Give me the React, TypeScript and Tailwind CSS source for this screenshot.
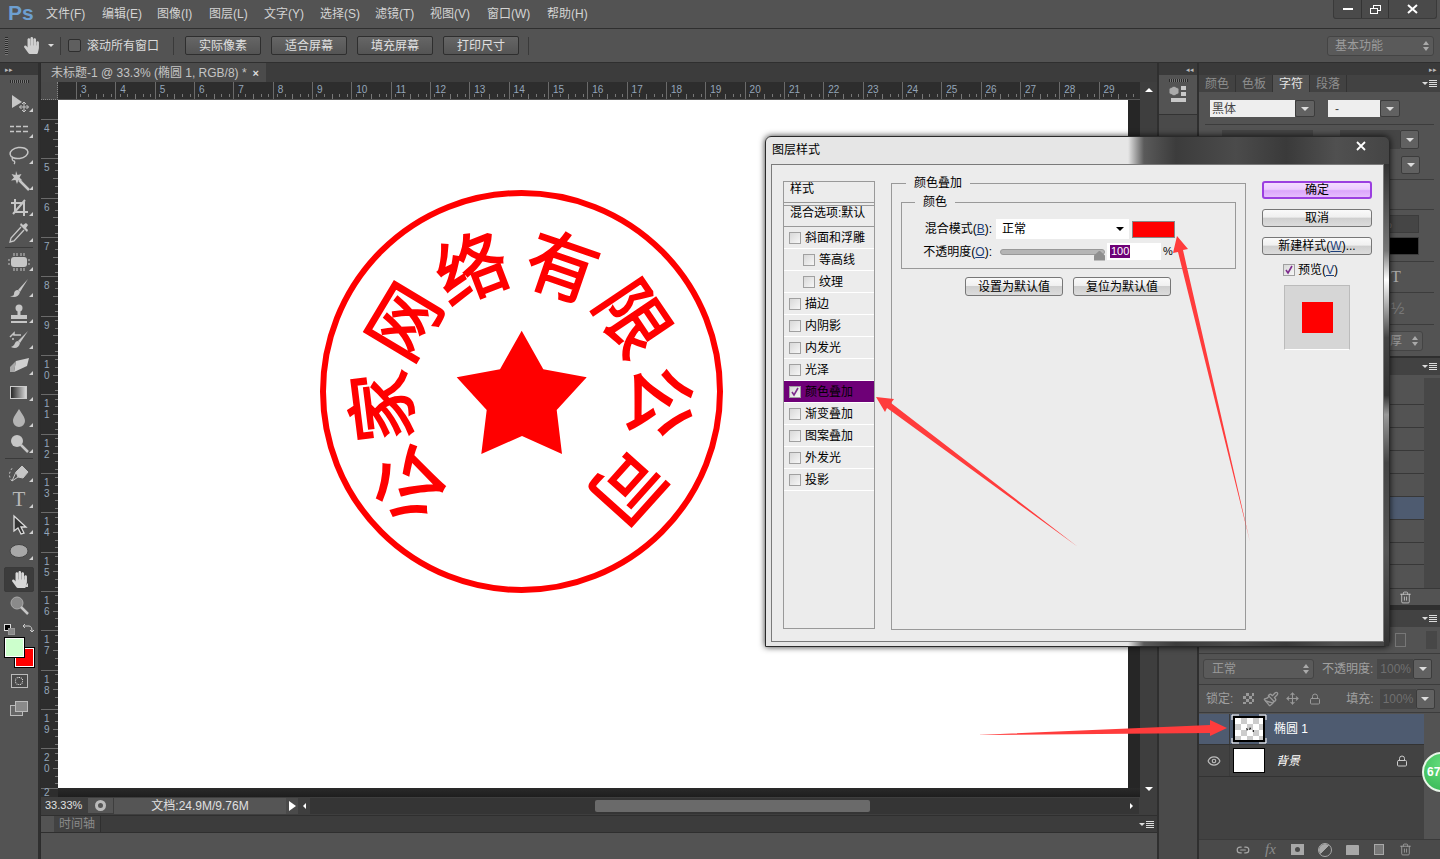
import { Eye, Link2, Lock, Move, Paintbrush, Trash2 } from "lucide-react";
import { FaHandPaper } from "react-icons/fa";
import type { ReactNode } from "react";

const menus = [
  ["文件(F)", "w-[56px]"],
  ["编辑(E)", "w-[55px]"],
  ["图像(I)", "w-[52px]"],
  ["图层(L)", "w-[55px]"],
  ["文字(Y)", "w-[56px]"],
  ["选择(S)", "w-[55px]"],
  ["滤镜(T)", "w-[55px]"],
  ["视图(V)", "w-[57px]"],
  ["窗口(W)", "w-[60px]"],
  ["帮助(H)", "w-[50px]"],
] as const;
const viewButtons = ["实际像素", "适合屏幕", "填充屏幕", "打印尺寸"];
const hRuler = Array.from({ length: 27 }, (_, i) => i + 3);
const vRuler = Array.from({ length: 17 }, (_, i) => i + 4);

const styleRows = [
  { label: "斜面和浮雕" },
  { label: "等高线", sub: true },
  { label: "纹理", sub: true },
  { label: "描边" },
  { label: "内阴影" },
  { label: "内发光" },
  { label: "光泽" },
  { label: "颜色叠加", active: true },
  { label: "渐变叠加" },
  { label: "图案叠加" },
  { label: "外发光" },
  { label: "投影" },
];

const stamp = [
  ["公", 405, 489, -131],
  ["家", 377, 407, -97],
  ["网", 400, 319, -59],
  ["络", 470, 264, -21],
  ["有", 564, 262, 19],
  ["限", 637, 315, 56],
  ["公", 665, 402, 94],
  ["司", 632, 490, 132],
] as const;

function Svg({ children }: { children: ReactNode }) {
  return (
    <svg width="24" height="24" viewBox="0 0 24 24" className="block" fill="none">
      {children}
    </svg>
  );
}

const c = "#c6c6c6";

const toolsA: ReactNode[] = [
  <Svg>
    <path d="M5 4v13l10-6z" fill={c} />
    <path d="M17 11v10M12.5 16h9M17 11l-2 2M17 11l2 2M17 21l-2-2M17 21l2-2M12.5 16l2-2M12.5 16l2 2M21.5 16l-2-2M21.5 16l-2 2" stroke={c} />
  </Svg>,
  <Svg>
    <path d="M3 9.5h4M9 9.5h5M16 9.5h5M3 14.5h4M9 14.5h5M16 14.5h5" stroke={c} strokeWidth="1.5" />
  </Svg>,
  <Svg>
    <ellipse cx="12" cy="10" rx="9" ry="5.5" stroke={c} strokeWidth="1.5" transform="rotate(-8 12 10)" />
    <path d="M6 14c-2 2 0 4 1 4s1 2 0 3" stroke={c} strokeWidth="1.3" />
  </Svg>,
  <Svg>
    <path d="M9 2l1.5 4 4-1-2 3.5 3 3-4-.5-1.500 4-1.500-4-4.500.5 3-3-2.500-3.500 4 1z" fill={c} />
    <path d="M12 11l10 10" stroke={c} strokeWidth="2.500" />
  </Svg>,
  <Svg>
    <path d="M8 4v13h13M4 8h13v13M18 5L6 19" stroke={c} strokeWidth="2" />
  </Svg>,
  <Svg>
    <path d="M14 6L4 17l-1 4 4-1 10-11" stroke={c} strokeWidth="1.300" />
    <path d="M13 4l7 7 1-2-2-2 2-3-2-2-3 2-2-2z" fill={c} />
  </Svg>,
];

const toolsB: ReactNode[] = [
  <Svg>
    <rect x="4" y="7" width="16" height="10" rx="3" fill={c} />
    <path d="M7 3v3M10 3v3M14 3v3M17 3v3M7 18v3M10 18v3M14 18v3M17 18v3M1 10h2M1 14h2M21 10h2M21 14h2" stroke={c} />
  </Svg>,
  <Svg>
    <path d="M21 3L11 14l2 2z" fill={c} />
    <path d="M11 14c-3 0-4 2-4 4s-2 2-4 2c4 2 9 1 10-4z" fill={c} />
  </Svg>,
  <Svg>
    <circle cx="12" cy="6" r="3.500" fill={c} />
    <path d="M10.500 8h3v5h-3zM4 13h16v4H4zM4 19h16v2H4z" fill={c} />
  </Svg>,
  <Svg>
    <path d="M21 3L11 13l2 2z" fill={c} />
    <path d="M11 13c-3 0-3 3-4 4s-3 2-3 2c4 2 8 1 9-4z" fill={c} />
    <path d="M3 9l4-4v2h7M5 11h2" stroke={c} strokeWidth="1.500" />
  </Svg>,
  <Svg>
    <path d="M9 7L22 4l-2 8-13 6z" fill="#d0d0d0" />
    <path d="M3 13l6-6-2 11H3z" fill="#a8a8a8" />
  </Svg>,
  <Svg>
    <defs>
      <linearGradient id="grad" x1="0" x2="1" y1="0" y2="0">
        <stop offset="0" stopColor="#222" />
        <stop offset="1" stopColor="#ddd" />
      </linearGradient>
    </defs>
    <rect x="3.500" y="6.500" width="16" height="12" fill="url(#grad)" stroke="#ccc" />
  </Svg>,
  <Svg>
    <path d="M12 3c-3 5-6 8-6 12a6 6 0 0012 0c0-4-3-7-6-12z" fill="#b4b4b4" />
  </Svg>,
  <Svg>
    <circle cx="10" cy="9" r="6" fill={c} />
    <path d="M14 13l7 7" stroke={c} strokeWidth="2.500" />
  </Svg>,
];

function Corner() {
  return <span className="absolute bottom-[4px] right-[5px] h-0 w-0 border-b-[4px] border-l-[4px] border-b-[#d0d0d0] border-l-transparent" />;
}

function Tool({ children, corner = true }: { children: ReactNode; corner?: boolean }) {
  return (
    <div className="relative flex h-[26px] items-center justify-center">
      {children}
      {corner && <Corner />}
    </div>
  );
}

function Grip({ className = "" }: { className?: string }) {
  return <div className={`mx-auto h-[3px] w-[19px] bg-[repeating-linear-gradient(90deg,#2a2a2a_0,#2a2a2a_1px,#777_1px,#777_2px)] ${className}`} />;
}

function PanelMenu() {
  return (
    <span className="flex items-center gap-px">
      <span className="h-0 w-0 border-x-[3px] border-t-[3px] border-x-transparent border-t-[#ddd]" />
      <span className="flex h-[7px] w-[8px] flex-col justify-between">
        <span className="h-px bg-[#ddd]" />
        <span className="h-px bg-[#ddd]" />
        <span className="h-px bg-[#ddd]" />
        <span className="h-px bg-[#ddd]" />
      </span>
    </span>
  );
}

function DownBox({ className = "" }: { className?: string }) {
  return (
    <span className={`flex items-center justify-center rounded-[2px] border border-[#3c3c3c] bg-[#616161] ${className}`}>
      <span className="h-0 w-0 border-x-[4px] border-t-[4px] border-x-transparent border-t-[#ddd]" />
    </span>
  );
}

function UpDown() {
  return (
    <span className="flex flex-col gap-[2px]">
      <span className="h-0 w-0 border-x-[3px] border-b-[4px] border-x-transparent border-b-[#aaa]" />
      <span className="h-0 w-0 border-x-[3px] border-t-[4px] border-x-transparent border-t-[#aaa]" />
    </span>
  );
}

function Sep({ className = "" }: { className?: string }) {
  return <div className={`mx-[6px] h-px bg-[#3c3c3c] ${className}`} />;
}

function DlgButton({ children, className = "", primary = false }: { children: ReactNode; className?: string; primary?: boolean }) {
  const look = primary
    ? "border-2 border-[#9b3fe0] bg-[linear-gradient(#f3dcff_0,#eccbff_45%,#dba6fb_55%,#e6bdfd_100%)]"
    : "border border-[#777] bg-[linear-gradient(#fafafa_0,#f0f0f0_45%,#cfcfcf_50%,#dcdcdc_100%)]";
  return <div className={`flex items-center justify-center rounded-[3px] text-[12px] leading-none text-black ${look} ${className}`}>{children}</div>;
}

function Check({ checked = false }: { checked?: boolean }) {
  return (
    <span className="flex h-[12px] w-[12px] shrink-0 items-center justify-center border border-[#a0a0a0] bg-[linear-gradient(135deg,#d8d8d8,#f6f6f6)]">
      {checked && (
        <svg width="10" height="10" viewBox="0 0 10 10" fill="none">
          <path d="M2 5l2 3 4-7" stroke="#7d2a8c" strokeWidth="1.600" />
        </svg>
      )}
    </span>
  );
}

function LabelRow({ text, mark }: { text: string; mark: string }) {
  return (
    <span className="w-[90px] shrink-0 text-right text-[12px] leading-none text-black">
      {text}(<u className="text-[#1d3f7a]">{mark}</u>):
    </span>
  );
}

function Dialog() {
  return (
    <div className="absolute left-[765px] top-[136px] h-[511px] w-[625px] rounded-t-[6px] rounded-br-[6px] border border-[#2a2a2a] bg-[linear-gradient(90deg,#e6e6e6_0,#e6e6e6_362px,#5a5a5a_378px,#3c3c3c_410px,#4b4b4b_470px,#3a3a3a_520px,#505050_570px,#454545_100%)] pl-[5px] pr-[5px] pt-[27px] shadow-[0_0_6px_rgba(0,0,0,0.8)]">
      <div className="absolute left-[6px] top-[6px] text-[12px] leading-[14px] text-black">图层样式</div>
      <svg className="absolute right-[23px] top-[4px]" width="10" height="10" viewBox="0 0 10 10">
        <path d="M1 1l8 8M9 1l-8 8" stroke="#fff" strokeWidth="1.800" />
      </svg>
      <div className="absolute bottom-0 right-0 top-[27px] w-[5px] bg-[linear-gradient(#333_0,#777_18%,#fff_24%,#444_36%,#333_48%,#999_52%,#444_62%,#555_80%,#333_100%)]" />

      <div className="flex h-[478px] w-[613px] border border-[#7a7a7a] bg-[#ececec] pl-[11px]">
        {/* 样式列表 */}
        <div className="mt-[16px] h-[448px] w-[92px] shrink-0 border border-[#999] text-[12px] leading-none text-black">
          <div className="h-[21px] border-b border-[#999] pl-[6px] pt-px">样式</div>
          <div className="mt-[2px] h-[22px] border-y border-b-[#999] border-t-[#999] pl-[6px] pt-px">混合选项:默认</div>
          {styleRows.map((row) => (
            <div
              key={row.label}
              className={`flex h-[22px] items-center gap-[4px] border-b border-white ${row.active ? "bg-[#6e0077]" : ""} ${row.sub ? "pl-[19px]" : "pl-[5px]"}`}
            >
              <Check checked={row.active} />
              <span>{row.label}</span>
            </div>
          ))}
        </div>

        {/* 颜色叠加 */}
        <fieldset className="ml-[16px] mt-[10px] h-[455px] w-[355px] shrink-0 border border-[#999] px-[9px]">
          <legend className="ml-[5px] px-[8px] text-[12px] leading-[16px] text-black">颜色叠加</legend>
          <fieldset className="mt-[3px] h-[75px] w-[335px] border border-[#999] pt-[9px]">
            <legend className="ml-[13px] px-[8px] text-[12px] leading-[16px] text-black">颜色</legend>
            <div className="flex h-[20px] items-center">
              <LabelRow text="混合模式" mark="B" />
              <div className="ml-[4px] flex h-[20px] w-[133px] items-center justify-between bg-white pl-[6px] pr-[5px] text-[12px] text-black">
                正常
                <span className="h-0 w-0 border-x-[4px] border-t-[4px] border-x-transparent border-t-black" />
              </div>
              <div className="ml-[3px] h-[17px] w-[43px] border border-[#888] bg-[#ff0000]" />
            </div>
            <div className="mt-[4px] flex h-[17px] items-center">
              <LabelRow text="不透明度" mark="O" />
              <div className="relative ml-[8px] h-[6px] w-[105px] rounded-[3px] border border-[#999] bg-[#b5b5b5]">
                <span className="absolute left-[93px] top-[1px] h-[10px] w-[11px] bg-[#8f8f8f] [clip-path:polygon(50%_0,100%_50%,100%_100%,0_100%,0_50%)]" />
              </div>
              <div className="ml-[2px] flex h-[17px] w-[54px] items-center bg-white pl-[3px]">
                <span className="bg-[#6e0077] px-px text-[11px] leading-[13px] text-white">100</span>
              </div>
              <span className="ml-[2px] text-[11px] text-black">%</span>
            </div>
          </fieldset>
          <div className="ml-[64px] mt-[8px] flex gap-[10px]">
            <DlgButton className="h-[19px] w-[98px]">设置为默认值</DlgButton>
            <DlgButton className="h-[19px] w-[98px]">复位为默认值</DlgButton>
          </div>
        </fieldset>

        {/* 按钮列 */}
        <div className="ml-[16px] mt-[16px] flex w-[110px] shrink-0 flex-col gap-[10px]">
          <DlgButton primary className="h-[18px]">
            确定
          </DlgButton>
          <DlgButton className="h-[18px]">取消</DlgButton>
          <DlgButton className="h-[18px]">
            新建样式(<u className="text-[#1d3f7a]">W</u>)...
          </DlgButton>
          <div className="ml-[21px] -mt-[2px] flex h-[13px] items-center gap-[3px] text-[12px] text-black">
            <Check checked />
            <span>
              预览(<u className="text-[#1d3f7a]">V</u>)
            </span>
          </div>
          <div className="ml-[22px] -mt-px flex h-[65px] w-[66px] items-center justify-center border border-[#bbb] border-b-white bg-[#d6d6d6]">
            <div className="h-[31px] w-[31px] bg-[#ff0000]" />
          </div>
        </div>
      </div>
    </div>
  );
}

function Toolbar() {
  return (
    <aside className="flex w-[38px] shrink-0 flex-col bg-[#535353]">
      <div className="flex h-[12px] items-center bg-[#3a3a3a] pl-[5px] text-[7px] leading-none text-[#bbb]">▸▸</div>
      <Grip className="mt-[5px]" />
      <div className="mt-[7px]">
        {toolsA.map((t, i) => (
          <Tool key={i}>{t}</Tool>
        ))}
      </div>
      <div className="mx-[5px] my-px h-px bg-[#3a3a3a]" />
      {toolsB.map((t, i) => (
        <Tool key={i}>{t}</Tool>
      ))}
      <div className="mx-[5px] my-px h-px bg-[#3a3a3a]" />
      <Tool>
        <Svg>
          <path d="M15 5l6 6-5 6-5-1-2-5zM11 16l-6 4M9 11L5 20" fill={c} stroke={c} />
          <path d="M5 20c-4-5-3-9 1-14" stroke={c} strokeDasharray="2 2" />
        </Svg>
      </Tool>
      <Tool>
        <span className="font-['Liberation_Serif',serif] text-[21px] leading-none text-[#b8b8b8]">T</span>
      </Tool>
      <Tool>
        <Svg>
          <path d="M7 3v15l4-3 3 6 3-1-3-6h5z" stroke="#ddd" strokeWidth="1.300" fill="#333" />
        </Svg>
      </Tool>
      <Tool>
        <Svg>
          <ellipse cx="12" cy="12" rx="9" ry="6.500" fill="#a8a8a8" stroke="#444" />
        </Svg>
      </Tool>
      <div className="relative mx-auto mt-[3px] flex h-[25px] w-[30px] items-center justify-center rounded-[2px] border border-[#3a3a3a] bg-[#3c3c3c]">
        <FaHandPaper className="text-[17px] text-[#d8d8d8]" />
        <Corner />
      </div>
      <Tool corner={false}>
        <Svg>
          <circle cx="10" cy="10" r="6" fill="#8a8a8a" stroke="#aaa" />
          <path d="M14 14l7 7" stroke={c} strokeWidth="2.500" />
        </Svg>
      </Tool>
      <div className="relative mt-[4px] h-[50px]">
        <span className="absolute left-[4px] top-[2px] h-[7px] w-[7px] border border-[#ddd] bg-black" />
        <span className="absolute left-[8px] top-[6px] h-[7px] w-[7px] border border-[#999] bg-[#888]" />
        <svg className="absolute left-[22px] top-[1px]" width="12" height="12" viewBox="0 0 12 12" fill="none">
          <path d="M2 3h5c2 0 3 2 3 5M1 3l2-2M1 3l2 2M10 9l-2-2M10 9l2-2" stroke="#ccc" />
        </svg>
        <span className="absolute left-[15px] top-[26px] h-[19px] w-[19px] border border-white bg-[#ff0000] outline outline-black" />
        <span className="absolute left-[5px] top-[16px] h-[19px] w-[19px] border border-white bg-[#ccffcc] outline outline-black" />
      </div>
      <div className="mx-auto mt-[2px] flex h-[14px] w-[17px] items-center justify-center border border-[#bbb] bg-[#4a4a4a]">
        <span className="h-[8px] w-[8px] rounded-full border border-dotted border-white" />
      </div>
      <div className="relative ml-[10px] mt-[13px] h-[16px] w-[20px]">
        <span className="absolute left-0 top-[4px] h-[11px] w-[13px] border border-[#bbb] bg-[#666]" />
        <span className="absolute left-[5px] top-0 h-[11px] w-[13px] border border-[#bbb] bg-[#8a8a8a]" />
      </div>
    </aside>
  );
}

function Canvas() {
  return (
    <div className="relative flex-1 overflow-hidden bg-[#262626]">
      <div className="h-[688px] w-[1070px] bg-white" />
      <div className="h-[9px] w-full bg-[linear-gradient(#2a2a2a,#1e1e1e)]" />
      {/* 印章: the svg uses window coordinates, shifted by the canvas origin */}
      <svg className="absolute left-0 top-0 font-['Noto_Sans_CJK_SC',sans-serif]" width="1070" height="688" viewBox="58 100 1070 688">
        <circle cx="521.5" cy="391.5" r="198.5" fill="none" stroke="#ff0000" strokeWidth="6" />
        <polygon points="521.7,330.7 543.3,369.3 586.7,377.3 556.7,410 562,454 522,436 481.3,454 486.7,410 456.7,377.3 500,369.3" fill="#ff0000" />
        {stamp.map(([ch, x, y, a], i) => (
          <text key={i} transform={`translate(${x} ${y}) rotate(${a})`} textAnchor="middle" dominantBaseline="central" fontSize="71" fontWeight="400" fill="#ff0000" stroke="#ff0000" strokeWidth="1.800">
            {ch}
          </text>
        ))}
      </svg>
    </div>
  );
}

function DocArea() {
  return (
    <main className="flex w-[1117px] shrink-0 flex-col border-l border-[#2c2c2c] bg-[#535353]">
      <div className="flex h-[19px] bg-[#3c3c3c]">
        <div className="flex w-[225px] items-center gap-[6px] bg-[#4b4b4b] pl-[10px] pt-px text-[12px] leading-none text-[#c4c4c4]">
          <span>未标题-1 @ 33.3% (椭圆 1, RGB/8) *</span>
          <span className="text-[11px] font-bold text-[#ddd]">×</span>
        </div>
      </div>

      <div className="flex h-[715px]">
        <div className="flex w-[1099px] flex-col">
          <div className="flex h-[18px]">
            <div className="h-full w-[17px] shrink-0 border-b border-r border-dotted border-[#888] bg-[#4a4a4a]" />
            <div className="flex flex-1 overflow-hidden border-b border-[#555] bg-[#2d2d2d] pl-[18px]">
              {hRuler.map((n) => (
                <div key={n} className="relative h-full w-[39.33px] shrink-0 border-l border-[#6a6a6a] pl-[4px] font-['Liberation_Sans',sans-serif] text-[10px] leading-[15px] text-[#94a6ba]">
                  {n}
                  <div className="absolute inset-x-0 bottom-0 flex justify-around">
                    <span className="h-[3px] w-px bg-[#777]" />
                    <span className="h-[3px] w-px bg-[#777]" />
                    <span className="h-[5px] w-px bg-[#777]" />
                    <span className="h-[3px] w-px bg-[#777]" />
                    <span className="h-[3px] w-px bg-[#777]" />
                  </div>
                </div>
              ))}
            </div>
          </div>
          <div className="flex flex-1 overflow-hidden">
            <div className="h-full w-[17px] shrink-0 overflow-hidden bg-[#2d2d2d] pt-[19px]">
              {vRuler.map((n) => (
                <div key={n} className="relative h-[39.33px] border-t border-[#6a6a6a] pl-[3px] pt-[3px] font-['Liberation_Sans',sans-serif] text-[10px] leading-[11px] text-[#94a6ba]">
                  {String(n)
                    .split("")
                    .map((d, i) => (
                      <div key={i}>{d}</div>
                    ))}
                  <div className="absolute inset-y-0 right-0 flex flex-col justify-around">
                    <span className="ml-auto h-px w-[3px] bg-[#777]" />
                    <span className="ml-auto h-px w-[3px] bg-[#777]" />
                    <span className="ml-auto h-px w-[5px] bg-[#777]" />
                    <span className="ml-auto h-px w-[3px] bg-[#777]" />
                    <span className="ml-auto h-px w-[3px] bg-[#777]" />
                  </div>
                </div>
              ))}
              <div className="h-[9px] border-t border-[#6a6a6a] pl-[3px] font-['Liberation_Sans',sans-serif] text-[10px] leading-[8px] text-[#94a6ba]">2</div>
            </div>
            <Canvas />
          </div>
        </div>
        <div className="flex w-[17px] flex-col items-center justify-between bg-[#3e3e3e] py-[6px]">
          <span className="h-0 w-0 border-x-[4px] border-b-[4px] border-x-transparent border-b-white" />
          <span className="h-0 w-0 border-x-[4px] border-t-[4px] border-x-transparent border-t-white" />
        </div>
      </div>

      <div className="flex h-[18px] items-center bg-[#3e3e3e] pb-px font-['Liberation_Sans','Noto_Sans_CJK_SC',sans-serif] text-[11px] leading-none text-[#e0e0e0]">
        <span className="w-[47px] pl-[4px]">33.33%</span>
        <span className="flex h-[15px] w-[25px] items-center justify-center bg-[#555]">
          <span className="h-[11px] w-[11px] rounded-full border-[3px] border-[#bbb] bg-[#555]" />
        </span>
        <span className="ml-px flex h-[16px] w-[172px] items-center justify-center bg-[#555] text-[12px]">文档:24.9M/9.76M</span>
        <span className="flex h-[16px] w-[12px] items-center justify-center bg-[#4a4a4a]">
          <span className="h-0 w-0 border-y-[5px] border-l-[7px] border-y-transparent border-l-white" />
        </span>
        <span className="ml-[5px] h-0 w-0 border-y-[3px] border-r-[3px] border-y-transparent border-r-white" />
        <div className="relative ml-[4px] h-[16px] w-[829px] bg-[#353535]">
          <span className="absolute left-[285px] top-[2px] h-[12px] w-[275px] rounded-[2px] bg-[#6a6a6a]" />
          <span className="absolute right-[6px] top-[5px] h-0 w-0 border-y-[3px] border-l-[3px] border-y-transparent border-l-white" />
        </div>
      </div>
      <div className="flex h-[18px] border-b border-t border-b-[#2f2f2f] border-t-[#2f2f2f] bg-[#3c3c3c]">
        <span className="w-[13px] bg-[#535353]" />
        <span className="flex w-[47px] items-center justify-center border-r border-[#2f2f2f] bg-[#424242] text-[12px] leading-none text-[#8a8a8a]">时间轴</span>
        <span className="ml-auto flex items-center pr-[3px]">
          <PanelMenu />
        </span>
      </div>
    </main>
  );
}

function IconStrip() {
  return (
    <div className="w-[38px] shrink-0 bg-[#4a4a4a]">
      <div className="flex h-[12px] items-center justify-end bg-[#3a3a3a] pr-[3px] text-[7px] leading-none text-[#bbb]">◂◂</div>
      <div className="h-[40px] border-b border-[#333] bg-[#535353] pt-[4px]">
        <Grip />
        <svg className="mx-auto mt-[3px]" width="20" height="18" viewBox="0 0 20 18">
          <path d="M6 1l5 2.500v5L6 11 1 8.500v-5z" fill="#aaa" stroke="#555" />
          <path d="M13 1h5v4h-5zM13 7h5v4h-5zM3 13h15v4H3z" fill="#c8c8c8" />
        </svg>
      </div>
    </div>
  );
}

function Tabs({ items, active }: { items: string[]; active?: string }) {
  return (
    <div className="flex h-[17px] bg-[#424242] text-[12px] leading-none">
      {items.map((t) => (
        <span key={t} className={`flex w-[37px] items-center justify-center border-r border-[#333] pt-px ${t === active ? "bg-[#535353] text-[#e4e4e4]" : "text-[#8e8e8e]"}`}>
          {t}
        </span>
      ))}
      <span className="ml-auto flex items-center pr-[3px]">
        <PanelMenu />
      </span>
    </div>
  );
}

function CharacterPanel() {
  return (
    <section className="h-[281px] bg-[#535353]">
      <Tabs items={["颜色", "色板", "字符", "段落"]} active="字符" />
      <div className="ml-[11px] mt-[8px] flex h-[17px]">
        <div className="flex h-[17px] w-[85px] items-center bg-[#eeeeee] pl-[2px] text-[12px] leading-none text-[#444]">黑体</div>
        <DownBox className="h-[17px] w-[20px]" />
        <div className="ml-[13px] flex h-[17px] w-[52px] items-center bg-[#eeeeee] pl-[7px] text-[12px] leading-none text-[#444]">-</div>
        <DownBox className="h-[17px] w-[20px]" />
      </div>
      <Sep className="mt-[7px]" />
      <div className="mt-[5px] flex h-[19px]">
        <span className="ml-[23px] h-[19px] w-[91px] bg-[#454545]" />
        <span className="ml-[27px] h-[19px] w-[60px] bg-[#454545]" />
        <DownBox className="h-[19px] w-[19px]" />
      </div>
      <div className="mt-[7px] flex h-[18px] justify-end pr-[20px]">
        <DownBox className="h-[18px] w-[19px]" />
      </div>
      <Sep className="mt-[5px]" />
      <Sep className="mt-[29px]" />
      <div className="mr-[21px] mt-[5px] h-[18px] border border-[#3c3c3c] bg-[#454545] pl-[182px] text-[11px] leading-[16px] text-[#777]">%</div>
      <div className="mr-[21px] mt-[4px] h-[18px] border border-[#3c3c3c] bg-black" />
      <Sep className="mt-[6px]" />
      <div className="h-[30px] pl-[192px] font-['Liberation_Serif',serif] text-[16px] leading-[30px] text-[#aaa]">T</div>
      <Sep />
      <div className="h-[31px] pl-[192px] text-[16px] leading-[31px] text-[#777]">½</div>
      <Sep />
      <div className="ml-[6px] mr-[17px] mt-[6px] flex h-[20px] items-center justify-end gap-[10px] rounded-[3px] border border-[#444] bg-[#5a5a5a] pr-[4px] text-[12px] leading-none text-[#999]">
        厚
        <UpDown />
      </div>
    </section>
  );
}

function ListPanel() {
  return (
    <section className="mt-[2px] h-[247px] bg-[#535353]">
      <Tabs items={[]} />
      <div className="mt-[3px] flex h-[210px]">
        <div className="w-[225px]">
          <div className="h-[27px] border-b border-[#383838]" />
          {[0, 1, 2, 3].map((i) => (
            <div key={i} className="h-[23px] border-b border-[#383838]" />
          ))}
          <div className="h-[23px] border-b border-[#383838] bg-[#4e5b70]" />
          <div className="h-[23px] border-b border-[#383838]" />
          <div className="h-[22px] border-b border-[#383838]" />
          <div className="h-[23px]" />
        </div>
        <div className="flex-1 bg-[#474747]" />
      </div>
      <div className="flex h-[17px] items-center justify-end border-t border-[#383838] pr-[28px] text-[#ccc]">
        <Trash2 size={13} strokeWidth={1.5} />
      </div>
    </section>
  );
}

function LayersPanel() {
  return (
    <section className="mt-[5px] flex h-[249px] flex-col bg-[#535353]">
      <Tabs items={[]} />
      <div className="flex h-[27px] items-center justify-end gap-[20px] border-b border-[#3c3c3c] pr-[3px]">
        <span className="h-[14px] w-[11px] border border-[#777]" />
        <span className="h-[18px] w-[11px] bg-[#474747]" />
      </div>
      <div className="flex h-[31px] items-center border-b border-[#3c3c3c] text-[12px] leading-none">
        <div className="ml-[4px] flex h-[20px] w-[111px] items-center justify-between rounded-[3px] border border-[#444] bg-[#5a5a5a] pl-[8px] pr-[4px] text-[#999]">
          正常
          <UpDown />
        </div>
        <span className="ml-[8px] text-[#a0a0a0]">不透明度:</span>
        <span className="ml-[4px] flex h-[20px] w-[36px] items-center bg-[#474747] pl-[3px] text-[#707070]">100%</span>
        <DownBox className="h-[20px] w-[19px]" />
      </div>
      <div className="flex h-[28px] items-center border-b border-[#3c3c3c] text-[12px] leading-none text-[#a0a0a0]">
        <span className="ml-[7px]">锁定:</span>
        <span className="ml-[10px] h-[11px] w-[11px] bg-[conic-gradient(#999_25%,#555_0_50%,#999_0_75%,#555_0)] bg-[length:6px_6px]" />
        <Paintbrush size={16} className="ml-[9px] text-[#999]" />
        <Move size={13} className="ml-[7px] text-[#999]" />
        <Lock size={12} className="ml-[10px] text-[#999]" />
        <span className="ml-[25px]">填充:</span>
        <span className="ml-[6px] flex h-[20px] w-[36px] items-center bg-[#474747] pl-[3px] text-[#707070]">100%</span>
        <DownBox className="h-[20px] w-[19px]" />
      </div>
      <div className="mt-px flex flex-1">
        <div className="w-[225px] bg-[#424242]">
          <div className="flex h-[31px] items-center border-b border-[#333] bg-[#4e5b70]">
            <span className="h-full w-[31px] border-r border-[#3a3a3a]" />
            <div className="relative ml-[3px] h-[26px] w-[32px] border-2 border-black bg-[conic-gradient(#ccc_25%,#fff_0_50%,#ccc_0_75%,#fff_0)] bg-[length:12px_12px]">
              <svg className="absolute -inset-[4px]" width="36" height="30" viewBox="0 0 36 30" fill="none">
                <path d="M1 6V1h7M28 1h7v5M1 24v5h7M28 29h7v-5" stroke="#fff" />
                <path d="M15 14l2 1-1 2zM19 13l1 2-2 1zM21 17l2-1v2z" fill="#000" />
              </svg>
            </div>
            <span className="ml-[9px] text-[12px] leading-none text-white">椭圆 1</span>
          </div>
          <div className="flex h-[32px] items-center border-b border-[#333]">
            <span className="flex h-full w-[31px] items-center justify-center border-r border-[#3a3a3a] text-[#bbb]">
              <Eye size={14} />
            </span>
            <span className="ml-[3px] h-[25px] w-[32px] border border-black bg-white" />
            <span className="ml-[11px] text-[12px] italic leading-none text-white">背景</span>
            <Lock size={12} className="ml-auto mr-[16px] text-[#ccc]" />
          </div>
        </div>
      </div>
      <div className="flex h-[20px] items-center gap-[15px] border-t border-[#3a3a3a] bg-[#4a4a4a] pl-[37px] text-[#a8a8a8]">
        <Link2 size={14} />
        <span className="font-['Liberation_Serif',serif] text-[15px] italic leading-none text-[#8a8a8a]">fx</span>
        <span className="flex h-[11px] w-[13px] items-center justify-center bg-[#a8a8a8]">
          <span className="h-[5px] w-[5px] rounded-full bg-[#4a4a4a]" />
        </span>
        <span className="h-[12px] w-[12px] rounded-full bg-[linear-gradient(135deg,#a8a8a8_50%,#4a4a4a_50%)] outline outline-[#a8a8a8]" />
        <span className="h-[10px] w-[13px] rounded-t-[1px] bg-[#a8a8a8]" />
        <span className="h-[11px] w-[10px] border border-[#a8a8a8] bg-[#777]" />
        <Trash2 size={13} strokeWidth={1.5} />
      </div>
    </section>
  );
}

export default function App() {
  return (
    <div className="relative h-[859px] w-[1440px] overflow-hidden bg-[#535353] font-['Liberation_Sans','Noto_Sans_CJK_SC',sans-serif]">
      {/* 菜单栏 */}
      <header className="flex h-[29px] items-center border-b border-[#2f2f2f]">
        <span className="ml-[8px] -mt-[3px] w-[38px] text-[21px] font-bold leading-none text-[#6d9fd0]">Ps</span>
        <nav className="flex text-[12px] leading-none text-[#d4d4d4]">
          {menus.map(([m, w]) => (
            <span key={m} className={`${w} whitespace-nowrap`}>
              {m}
            </span>
          ))}
        </nav>
        <div className="ml-auto mr-[3px] flex h-[19px] items-center self-start rounded-b-[3px] border border-t-0 border-[#3a3a3a] bg-[#4a4a4a]">
          <span className="flex h-full w-[28px] items-center justify-center border-r border-[#333]">
            <span className="h-[2px] w-[10px] bg-white" />
          </span>
          <span className="flex h-full w-[27px] items-center justify-center border-r border-[#333]">
            <span className="relative h-[9px] w-[11px]">
              <span className="absolute right-0 top-0 h-[6px] w-[8px] border border-white" />
              <span className="absolute bottom-0 left-0 h-[6px] w-[8px] border border-white bg-[#4a4a4a]" />
            </span>
          </span>
          <span className="flex h-full w-[47px] items-center justify-center">
            <svg width="11" height="10" viewBox="0 0 11 10">
              <path d="M1 1l9 8M10 1l-9 8" stroke="#fff" strokeWidth="2" />
            </svg>
          </span>
        </div>
      </header>

      {/* 选项栏 */}
      <div className="flex h-[34px] items-center border-b border-[#2f2f2f] text-[12px] leading-none">
        <span className="ml-[5px] h-[18px] w-[3px] bg-[repeating-linear-gradient(#2a2a2a_0,#2a2a2a_1px,#777_1px,#777_2px)]" />
        <FaHandPaper className="ml-[15px] text-[17px] text-[#d0d0d0]" />
        <span className="ml-[8px] h-0 w-0 border-x-[3px] border-t-[3px] border-x-transparent border-t-[#ddd]" />
        <span className="ml-[6px] h-[18px] w-px bg-[#3a3a3a]" />
        <span className="ml-[7px] h-[13px] w-[13px] rounded-[2px] border border-[#2e2e2e] bg-[#5f5f5f]" />
        <span className="ml-[6px] text-[#dcdcdc]">滚动所有窗口</span>
        <span className="ml-[14px] h-[18px] w-px bg-[#3a3a3a]" />
        <div className="ml-[11px] flex gap-[10px]">
          {viewButtons.map((b) => (
            <span key={b} className="flex h-[19px] w-[76px] items-center justify-center rounded-[2px] border border-[#2e2e2e] bg-[linear-gradient(#666,#545454)] text-[#e0e0e0]">
              {b}
            </span>
          ))}
        </div>
        <span className="ml-[9px] h-[18px] w-px bg-[#3a3a3a]" />
        <div className="ml-auto mr-[6px] flex h-[20px] w-[107px] items-center justify-between rounded-[3px] border border-[#444] bg-[#5a5a5a] pl-[7px] pr-[4px] text-[#9c9c9c]">
          基本功能
          <UpDown />
        </div>
      </div>

      {/* 工作区 */}
      <div className="flex h-[796px] gap-0 bg-[#2f2f2f]">
        <Toolbar />
        <span className="w-[2px] shrink-0" />
        <DocArea />
        <span className="w-[2px] shrink-0" />
        <IconStrip />
        <span className="w-[2px] shrink-0" />
        <div className="w-[241px] shrink-0">
          <div className="flex h-[12px] items-center justify-end bg-[#3a3a3a] pr-[3px] text-[7px] leading-none text-[#bbb]">▸▸</div>
          <CharacterPanel />
          <ListPanel />
          <LayersPanel />
        </div>
      </div>

      <Dialog />

      {/* 标注箭头 */}
      <svg className="absolute left-0 top-0" width="1440" height="859" viewBox="0 0 1440 859" pointerEvents="none">
        <polygon points="876,397 894,399 891,403 1078,547 887,408 885,412" fill="#ff3c3c" />
        <polygon points="1177,236 1188,249 1183,250 1250,542 1178,252 1173,253" fill="#ff3c3c" />
        <polygon points="1227,728 1210,720 1210,725 976,735 1210,733 1210,736" fill="#ff3c3c" />
      </svg>

      {/* 悬浮球 */}
      <div className="absolute left-[1422px] top-[752px] flex h-[40px] w-[40px] items-center rounded-full border-2 border-[#e8f5e8] bg-[radial-gradient(circle_at_50%_30%,#63dc7c,#35b553)] pl-[3px] font-['Liberation_Sans',sans-serif] text-[12px] font-bold text-white">
        67
      </div>
    </div>
  );
}
